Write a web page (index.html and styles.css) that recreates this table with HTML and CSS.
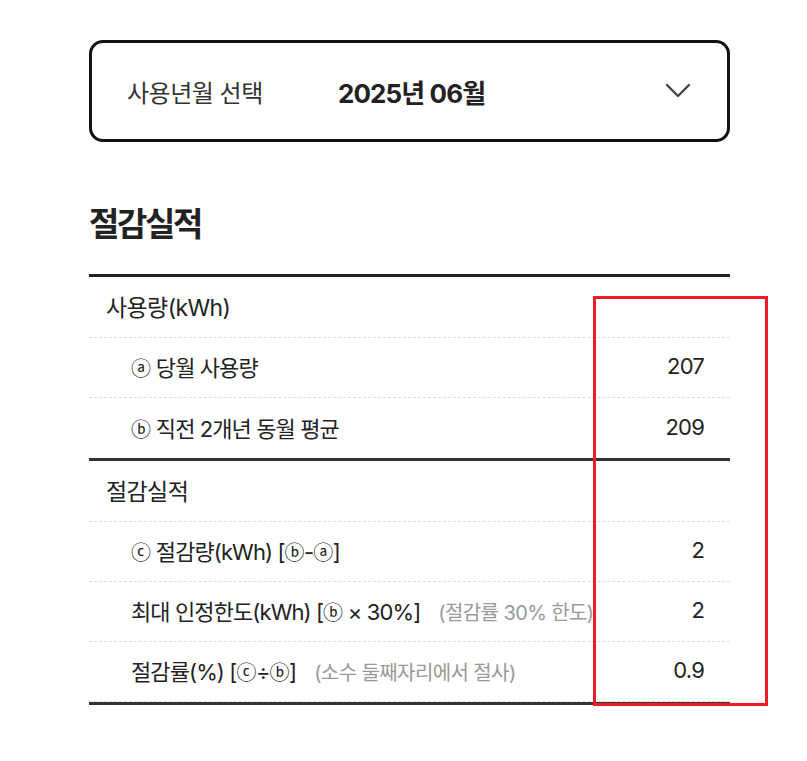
FILE: index.html
```html
<!DOCTYPE html>
<html lang="ko">
<head>
<meta charset="utf-8">
<link rel="stylesheet" href="styles.css">
</head>
<body>
<div class="page">
  <div class="select">
    <span class="select-label">사용년월 선택</span>
    <span class="select-value">2025년 06월</span>
    <svg class="chevron" width="26" height="16" viewBox="0 0 26 16"><path d="M2 2 L13 13 L24 2" fill="none" stroke="#444" stroke-width="2.4" stroke-linecap="round" stroke-linejoin="round"/></svg>
  </div>

  <h2 class="title">절감실적</h2>

  <div class="table">
    <div class="group">
      <div class="row head"><span class="label">사용량(kWh)</span></div>
      <div class="row sub"><span class="label"><span class="c">ⓐ</span> 당월 사용량</span><span class="val">207</span></div>
      <div class="row sub last"><span class="label"><span class="c">ⓑ</span> 직전 2개년 동월 평균</span><span class="val">209</span></div>
    </div>
    <div class="group">
      <div class="row head"><span class="label">절감실적</span></div>
      <div class="row sub"><span class="label"><span class="c">ⓒ</span> 절감량(kWh) [<span class="c">ⓑ</span>-<span class="c">ⓐ</span>]</span><span class="val">2</span></div>
      <div class="row sub"><span class="label">최대 인정한도(kWh) [<span class="c">ⓑ</span> × 30%]<span class="note">(절감률 30% 한도)</span></span><span class="val">2</span></div>
      <div class="row sub"><span class="label">절감률(%) [<span class="c">ⓒ</span>÷<span class="c">ⓑ</span>]<span class="note">(소수 둘째자리에서 절사)</span></span><span class="val">0.9</span></div>
    </div>
  </div>
</div>
<div class="highlight"></div>
</body>
</html>
```

FILE: styles.css
```css
* { box-sizing: border-box; }
html, body { margin: 0; padding: 0; background: #fff; }
body {
  font-family: "Inter", "Noto Sans CJK KR", "Noto Sans", sans-serif;
  color: #222;
  width: 807px;
  height: 761px;
  position: relative;
  overflow: hidden;
}
.page {
  width: 641px;
  margin: 40px 0 0 89px;
}
.select {
  height: 102px;
  border: 3px solid #111;
  border-radius: 14px;
  display: flex;
  align-items: center;
  padding: 0 36px 0 35px;
}
.select-label {
  font-size: 24px;
  color: #333;
  letter-spacing: -0.5px;
  width: 211px;
}
.select-value {
  font-size: 26px;
  font-weight: 700;
  color: #222;
  letter-spacing: -0.9px;
  flex: 1;
}
.chevron { display: block; }
.title {
  margin: 58px 0 0;
  font-size: 33px;
  font-weight: 700;
  letter-spacing: -2.4px;
  line-height: 48px;
  color: #222;
}
.table {
  margin-top: 26px;
  border-top: 3px solid #222;
}
.group { border-bottom: 3px solid #333; }
.row {
  display: flex;
  align-items: center;
  justify-content: space-between;
  height: 60px;
  padding-bottom: 3px;
  font-size: 22px;
  letter-spacing: -0.9px;
  color: #222;
  border-bottom: 1px dashed #ddd;
}
.row.head { padding-left: 17px; height: 61px; font-size: 23px; letter-spacing: -0.6px; }
.row.sub { padding-left: 42px; padding-right: 26px; }
.row.last { border-bottom: none; }
.c { font-family: "Noto Sans CJK KR", sans-serif; font-size: 20px; letter-spacing: -0.5px; }
.note {
  color: #999;
  font-size: 20px;
  margin-left: 18px;
  letter-spacing: -0.6px;
}
.val { letter-spacing: -0.8px; }
.highlight {
  position: absolute;
  left: 593px;
  top: 296px;
  width: 175px;
  height: 410px;
  border: 3px solid #ee1c25;
}
```
